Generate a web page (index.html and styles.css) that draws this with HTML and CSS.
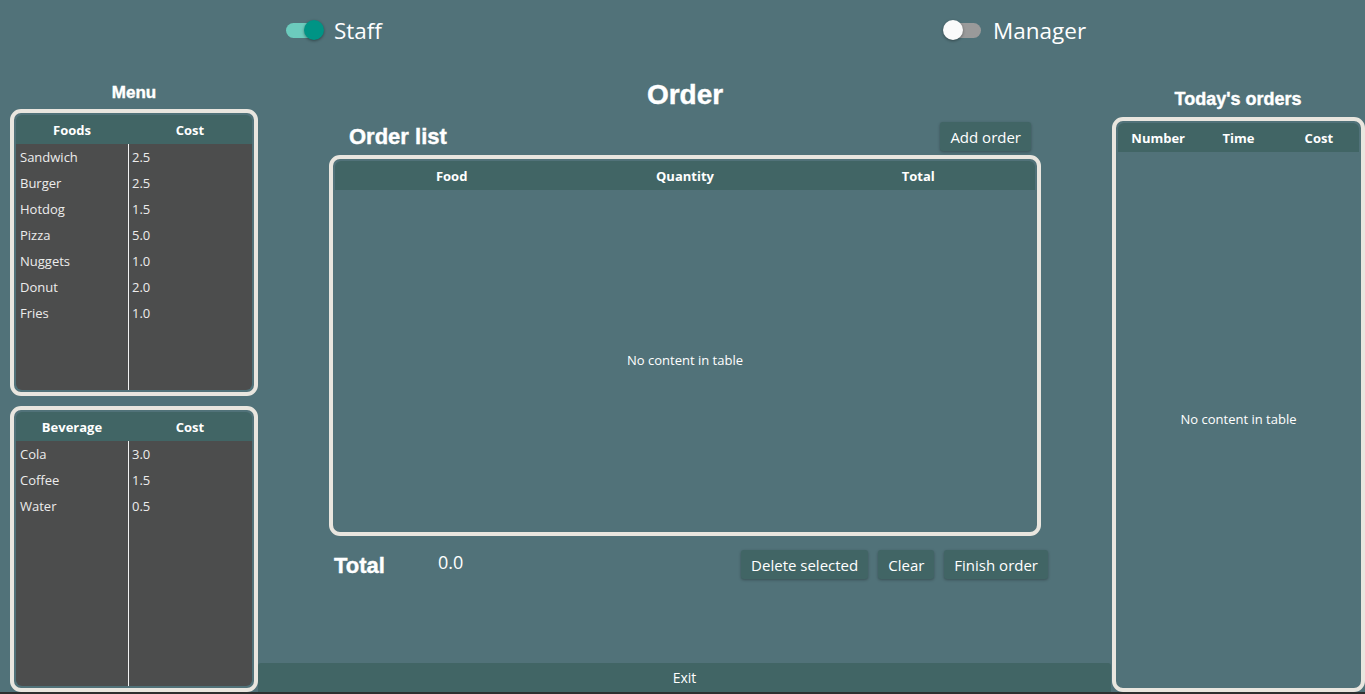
FILE: index.html
```html
<!DOCTYPE html>
<html>
<head>
<meta charset="utf-8"/>
<title>Restaurant orders</title>
<link rel="stylesheet" href="styles.css">
</head>
<body>
<div class="app">

  <div class="topbar">
    <label class="switch-label">
      <span class="switch on"><span class="track"></span><span class="thumb"></span></span>
      Staff
    </label>
    <label class="switch-label">
      <span class="switch"><span class="track"></span><span class="thumb"></span></span>
      Manager
    </label>
  </div>

  <!-- menu -->
  <div class="menu-col">
    <h2 class="side-title">Menu</h2>
    <div class="box menu-box">
      <div class="box-inner">
        <div class="thead menu-cols"><span>Foods</span><span>Cost</span></div>
        <div class="tbody menu-body">
          <div class="row menu-cols"><span>Sandwich</span><span>2.5</span></div>
          <div class="row menu-cols"><span>Burger</span><span>2.5</span></div>
          <div class="row menu-cols"><span>Hotdog</span><span>1.5</span></div>
          <div class="row menu-cols"><span>Pizza</span><span>5.0</span></div>
          <div class="row menu-cols"><span>Nuggets</span><span>1.0</span></div>
          <div class="row menu-cols"><span>Donut</span><span>2.0</span></div>
          <div class="row menu-cols"><span>Fries</span><span>1.0</span></div>
        </div>
      </div>
    </div>
    <div class="box bev-box">
      <div class="box-inner">
        <div class="thead menu-cols"><span>Beverage</span><span>Cost</span></div>
        <div class="tbody menu-body">
          <div class="row menu-cols"><span>Cola</span><span>3.0</span></div>
          <div class="row menu-cols"><span>Coffee</span><span>1.5</span></div>
          <div class="row menu-cols"><span>Water</span><span>0.5</span></div>
        </div>
      </div>
    </div>
  </div>

  <!-- order -->
  <div class="order-col">
    <div class="order-area">
      <h1 class="order-title">Order</h1>
      <div class="list-head">
        <h2 class="list-title">Order list</h2>
        <button class="btn">Add order</button>
      </div>
      <div class="box order-box">
        <div class="box-inner">
          <div class="thead three"><span>Food</span><span>Quantity</span><span>Total</span></div>
          <div class="tbody empty">No content in table</div>
        </div>
      </div>
      <div class="total-row">
        <span class="total-label">Total</span>
        <span class="total-value">0.0</span>
        <div class="actions">
          <button class="btn">Delete selected</button>
          <button class="btn">Clear</button>
          <button class="btn">Finish order</button>
        </div>
      </div>
    </div>
    <button class="exit">Exit</button>
  </div>

  <!-- today -->
  <div class="today-col">
    <h2 class="side-title today-title">Today's orders</h2>
    <div class="box today-box">
      <div class="box-inner">
        <div class="thead three"><span>Number</span><span>Time</span><span>Cost</span></div>
        <div class="tbody empty">No content in table</div>
      </div>
    </div>
  </div>

</div>
</body>
</html>
```

FILE: styles.css
```css
html, body {
  margin: 0;
  padding: 0;
}

body {
  background-color: #2d2f2f;
  font-family: "Open Sans", "Noto Sans", sans-serif;
  color: #fff;
  height: 694px;
  overflow: hidden;
}

.app {
  height: 692px;
  background-color: #517279;
  display: grid;
  grid-template-columns: 248px 853px 1fr;
  grid-template-rows: 60px 1fr;
  padding-left: 10px;
  box-sizing: border-box;
}

/* toggles */
.topbar {
  grid-column: 1 / -1;
  display: grid;
  grid-template-columns: 659px auto;
  align-items: center;
  padding-left: 274px;
}

.switch-label {
  display: flex;
  align-items: center;
  gap: 10px;
  font-size: 22.5px;
  color: #fff;
}

.switch {
  position: relative;
  width: 40px;
  height: 20px;
  display: block;
}

.switch .track {
  position: absolute;
  left: 2px;
  right: 2px;
  top: 3px;
  height: 15px;
  border-radius: 8px;
  background-color: #9a9a9a;
}

.switch .thumb {
  position: absolute;
  left: 0;
  top: 0;
  width: 20px;
  height: 20px;
  border-radius: 50%;
  background-color: #fafafa;
  box-shadow: 0 1px 3px rgba(0, 0, 0, 0.4);
}

.switch.on .track {
  background-color: #6ccbbd;
}

.switch.on .thumb {
  left: 20px;
  background-color: #009485;
}

/* headings */
.side-title, .order-title, .list-title, .total-label {
  margin: 0;
  font-family: "Liberation Sans", Arial, sans-serif;
  font-weight: bold;
  -webkit-text-stroke: 0.4px #fff;
}

.side-title {
  font-size: 17px;
  line-height: 20px;
  text-align: center;
}

.order-title {
  font-size: 28px;
  line-height: 32px;
  text-align: center;
}

.list-title {
  font-size: 22px;
}

/* boxes */
.box {
  border: 4px solid #e9e6df;
  border-radius: 11px;
  padding: 2px;
  box-sizing: border-box;
  display: flex;
}

.box-inner {
  flex: 1;
  display: flex;
  flex-direction: column;
  border-radius: 6px;
  overflow: hidden;
}

.thead {
  height: 29px;
  flex: none;
  background-color: #416565;
  font-size: 13px;
  font-weight: bold;
  align-items: center;
  text-align: center;
}

.tbody {
  flex: 1;
  font-size: 13px;
  color: #ececec;
}

.menu-cols {
  display: grid;
  grid-template-columns: 112px 1fr;
}

.three {
  display: grid;
  grid-template-columns: 1fr 1fr 1fr;
}

.menu-body {
  background: linear-gradient(to right, transparent 112px, #f2f2f2 112px, #f2f2f2 113px, transparent 113px), #4c4d4d;
}

.row {
  height: 26px;
  align-items: center;
}

.row span {
  padding-left: 4px;
}

.empty {
  display: flex;
  align-items: center;
  justify-content: center;
  color: #fff;
}

/* left column */
.menu-col {
  display: flex;
  flex-direction: column;
  padding-top: 23px;
}

.menu-box {
  height: 287px;
  margin-top: 6px;
  margin-bottom: 10px;
}

.bev-box {
  flex: 1;
}

/* center */
.order-col {
  display: flex;
  flex-direction: column;
  padding-top: 19px;
}

.order-area {
  width: 712px;
  margin-left: 71px;
}

.list-head {
  display: flex;
  justify-content: space-between;
  align-items: center;
  margin-top: 11px;
  height: 29px;
  padding: 0 10px 0 20px;
}

.order-box {
  height: 381px;
  margin-top: 4px;
}

.btn {
  height: 29px;
  padding: 0 10px;
  border: none;
  border-radius: 3px;
  background-color: #416565;
  color: #fff;
  font-family: "Open Sans", "Noto Sans", sans-serif;
  font-size: 15px;
  box-shadow: 0 1px 3px rgba(0, 0, 0, 0.3);
}

.total-row {
  display: flex;
  align-items: center;
  margin-top: 14px;
  margin-right: -7px;
  padding-left: 5px;
  height: 29px;
}

.total-label {
  width: 104px;
  font-size: 22px;
  margin-top: 3px;
}

.total-value {
  font-size: 18px;
  margin-top: -5px;
}

.actions {
  margin-left: auto;
  display: flex;
  gap: 10px;
}

.exit {
  margin-top: auto;
  height: 29px;
  border: none;
  border-radius: 3px 3px 0 0;
  background-color: #416565;
  color: #fff;
  font-family: "Open Sans", "Noto Sans", sans-serif;
  font-size: 14px;
}

/* right column */
.today-col {
  display: flex;
  flex-direction: column;
  padding-top: 28px;
}

.today-title {
  font-size: 18px;
  line-height: 22px;
}

.today-box {
  flex: 1;
  margin-top: 7px;
  margin-left: 1px;
}
```
